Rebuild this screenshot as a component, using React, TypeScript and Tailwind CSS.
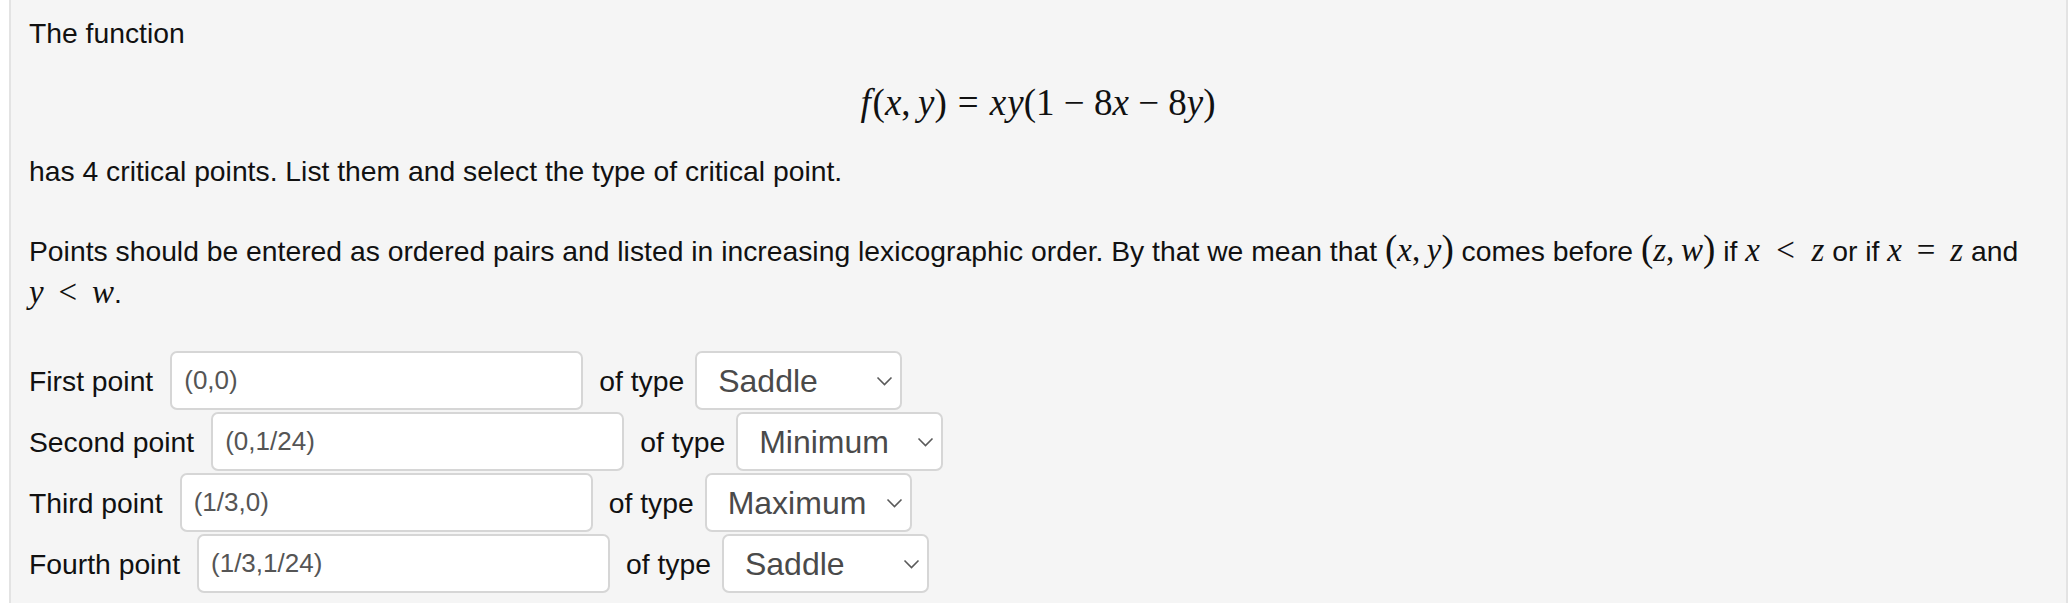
import React from "react";

function Chevron() {
  return (
    <svg width="17" height="10" viewBox="0 0 17 10" className="shrink-0">
      <polyline points="1.5,1.5 8.5,8.5 15.5,1.5" fill="none" stroke="#5a5a5a" strokeWidth="1.6" />
    </svg>
  );
}

function Row({ label, value, type }: { label: string; value: string; type: string }) {
  return (
    <div className="flex items-center h-[59px]">
      <span className="whitespace-nowrap">{label}</span>
      <input
        readOnly
        value={value}
        className="ml-[17px] w-[413px] h-[59px] bg-white border-2 border-[#d6d6d6] rounded-[7px] pl-[12px] text-[26px] text-[#555555] outline-none font-['Liberation_Sans',Arial,sans-serif]"
      />
      <span className="ml-[16px] whitespace-nowrap">of type</span>
      <div className="ml-[11px] w-[207px] h-[59px] bg-white border-2 border-[#d6d6d6] rounded-[7px] pl-[21px] pr-[7px] flex items-center justify-between text-[32px] text-[#4a4a4a]">
        <span>{type}</span>
        <Chevron />
      </div>
    </div>
  );
}

export default function App() {
  const serif = "font-['Liberation_Serif','Times_New_Roman',serif] leading-none";
  return (
    <div className="bg-white w-[2069px] h-[603px] pl-[9px] overflow-hidden">
      <div className="w-[2059px] h-[603px] bg-[#f5f5f5] border-l-2 border-r-2 border-[#e3e3e3] pl-[18px] pr-[19px] pt-[12px] text-[28.3px] leading-[42px] text-[#111111] font-['Liberation_Sans',Arial,sans-serif]">
        <p>The function</p>
        <div className={`h-[96px] flex items-center justify-center text-[37px] ${serif}`}>
          <span className="whitespace-nowrap">
            <i>f</i>
            <span className="ml-[0.05em]">(</span>
            <i>x</i>,<span className="ml-[0.2em]"></span>
            <i>y</i>)
            <span className="mx-[0.3em]">=</span>
            <i>x</i><i className="ml-[0.03em]">y</i>(1<span className="mx-[0.25em]">−</span>8<i>x</i>
            <span className="mx-[0.25em]">−</span>8<i>y</i>)
          </span>
        </div>
        <p>has 4 critical points. List them and select the type of critical point.</p>
        <p className="mt-[38px]">
          <span className="whitespace-nowrap">
            Points should be entered as ordered pairs and listed in increasing lexicographic order. By that we mean that{" "}
            <span className={`${serif} text-[33px]`}>
              <span className="text-[37px]">(</span>
              <i>x</i>,<span className="ml-[0.2em]"></span>
              <i>y</i>
              <span className="text-[37px]">)</span>
            </span>{" "}
            comes before{" "}
            <span className={`${serif} text-[33px]`}>
              <span className="text-[37px]">(</span>
              <i>z</i>,<span className="ml-[0.2em]"></span>
              <i>w</i>
              <span className="text-[37px]">)</span>
            </span>{" "}
            if{" "}
            <span className={`${serif} text-[33px]`}>
              <i>x</i>
              <span className="mx-[0.5em]">&lt;</span>
              <i>z</i>
            </span>{" "}
            or if{" "}
            <span className={`${serif} text-[33px]`}>
              <i>x</i>
              <span className="mx-[0.45em]">=</span>
              <i>z</i>
            </span>{" "}
            and
          </span>
          <br />
          <span className={`${serif} text-[33px]`}>
            <i>y</i>
            <span className="mx-[0.45em]">&lt;</span>
            <i>w</i>
          </span>
          .
        </p>
        <div className="mt-[37px] flex flex-col gap-[2px]">
          <Row label="First point" value="(0,0)" type="Saddle" />
          <Row label="Second point" value="(0,1/24)" type="Minimum" />
          <Row label="Third point" value="(1/3,0)" type="Maximum" />
          <Row label="Fourth point" value="(1/3,1/24)" type="Saddle" />
        </div>
      </div>
    </div>
  );
}
